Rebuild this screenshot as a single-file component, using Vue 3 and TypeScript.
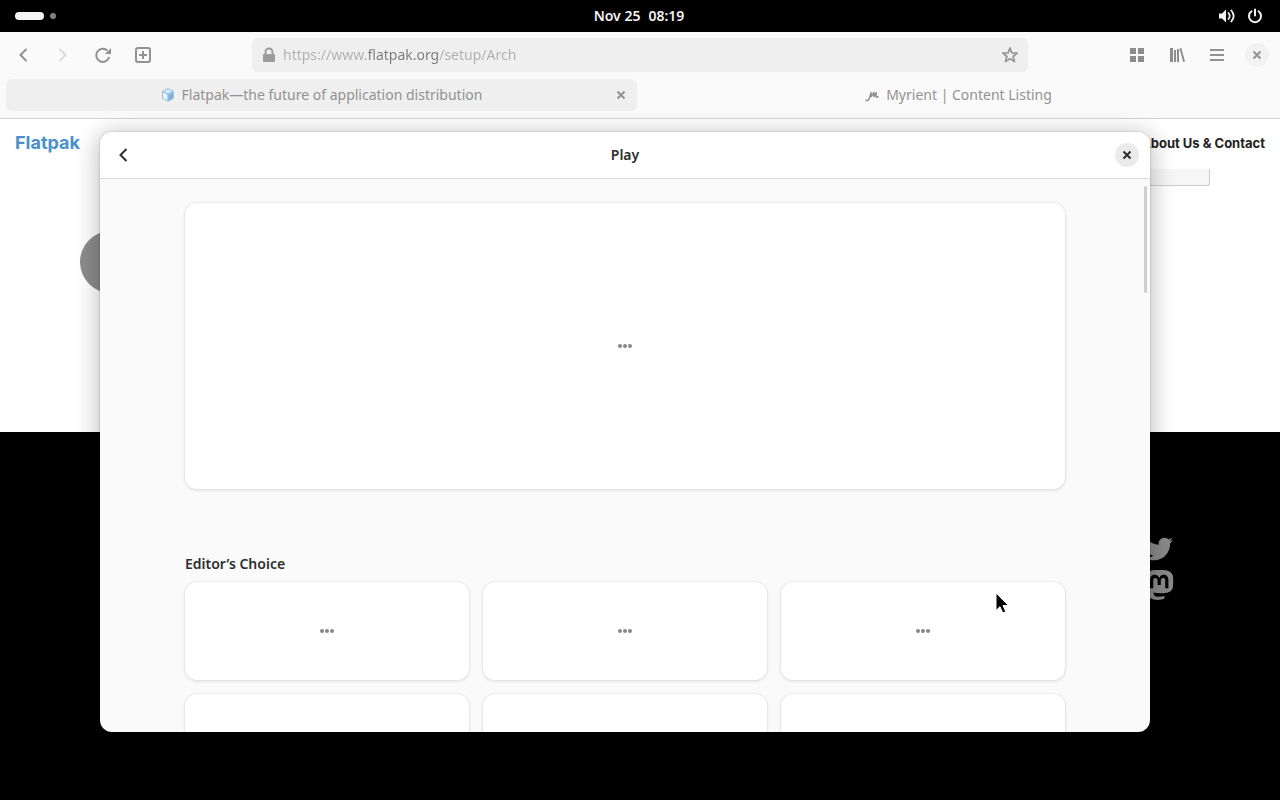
<script setup lang="ts">
import { ref } from 'vue'

interface Tab {
  id: string
  title: string
  active: boolean
}

const address = ref('https://www.flatpak.org/setup/Arch')
const tabs: Tab[] = [
  { id: 'flatpak', title: 'Flatpak—the future of application distribution', active: true },
  { id: 'myrient', title: 'Myrient | Content Listing', active: false },
]
const editorsChoice: number[] = [1, 2, 3, 4, 5, 6]
</script>

<template>
  <div class="desktop">
    <header class="topbar">
      <button class="workspaces" aria-label="Activities"><i class="pill"></i><i class="dot"></i></button>
      <button class="clock"><span>Nov 25</span><span>08:19</span></button>
      <button class="status" aria-label="System menu">
        <svg width="18" height="16" viewBox="0 0 18 16">
          <path d="M1 5.500h3L8 1.500v13L4 10.500H1z" fill="#f2f2f2" />
          <path d="M10.500 5q2.400 3 0 6M13.300 2.500q4.800 5.500 0 11" fill="none" stroke="#f2f2f2" stroke-width="1.800" stroke-linecap="round" />
        </svg>
        <svg width="16" height="16" viewBox="0 0 16 16">
          <path d="M4.500 3.300a6 6 0 1 0 7 0M8 1.500v6" fill="none" stroke="#f2f2f2" stroke-width="2" stroke-linecap="round" />
        </svg>
      </button>
    </header>

    <section class="browser">
      <div class="toolbar">
        <nav class="tools">
          <button aria-label="Back">
            <svg width="16" height="16" viewBox="0 0 16 16"><path d="M11.500 2 5.500 8l6 6" class="line" /></svg>
          </button>
          <button aria-label="Forward" class="off" disabled>
            <svg width="16" height="16" viewBox="0 0 16 16"><path d="m4.500 2 6 6-6 6" class="line" /></svg>
          </button>
          <button aria-label="Reload">
            <svg width="18" height="18" viewBox="0 0 18 18">
              <path d="M15.200 11A6.600 6.600 0 1 1 13.500 4.600" class="line" />
              <path d="M17 2v6h-6l2.300-2.300z" fill="currentColor" />
            </svg>
          </button>
          <button aria-label="New tab">
            <svg width="18" height="18" viewBox="0 0 18 18">
              <rect x="2" y="2" width="14" height="14" rx="2" class="line" />
              <path d="M9 5v8M5 9h8" class="line" />
            </svg>
          </button>
        </nav>

        <div class="address">
          <svg width="16" height="16" viewBox="0 0 16 16">
            <rect x="2" y="7" width="12" height="8" rx="1" fill="#9c9c9c" />
            <path d="M4.500 8V5a3.500 3.500 0 0 1 7 0v3" fill="none" stroke="#9c9c9c" stroke-width="2" />
          </svg>
          <input v-model="address" type="text" aria-label="Address" spellcheck="false" />
          <button aria-label="Bookmark">
            <svg width="18" height="18" viewBox="0 0 18 18">
              <path d="m9 2 1.900 4.900 5.300.3-4.100 3.300 1.400 5.100L9 12.700l-4.500 2.900 1.400-5.100-4.100-3.300 5.300-.3z" fill="none" stroke="#969696" stroke-width="1.700" stroke-linejoin="round" />
            </svg>
          </button>
        </div>

        <div class="tools end">
          <button aria-label="Tab overview">
            <svg width="16" height="16" viewBox="0 0 16 16" fill="#8c8c8c">
              <path d="M1 1h6v6H1zM9 1h6v6H9zM1 9h6v6H1zM9 9h6v6H9z" />
            </svg>
          </button>
          <button aria-label="Library">
            <svg width="16" height="16" viewBox="0 0 16 16" fill="#8c8c8c">
              <path d="M1 1h3v14H1zM5 3h2v12H5zM8 2h2v13H8zM10.500 1.400l1.800-.5L16 14.500l-1.800.5z" />
            </svg>
          </button>
          <button aria-label="Main menu">
            <svg width="16" height="16" viewBox="0 0 16 16"><path d="M1 3h14M1 8h14M1 13h14" class="line" /></svg>
          </button>
          <button aria-label="Close window" class="round">
            <svg width="16" height="16" viewBox="0 0 16 16"><path d="m4.500 4.500 7 7m0-7-7 7" class="line" /></svg>
          </button>
        </div>
      </div>

      <div class="tabs" role="tablist">
        <div v-for="tab in tabs" :key="tab.id" class="tab" :class="{ active: tab.active }">
          <button class="tab-title" role="tab" :aria-selected="tab.active">
            <svg v-if="tab.active" width="14" height="14" viewBox="0 0 14 14">
              <path d="M7 0l6 3v7.500L7 14 1 10.500V3z" fill="#9cc4e2" />
              <path d="M7 1l4.500 2.300L7 5.600 2.500 3.300z" fill="#d5e7f3" />
              <path d="M2 4.500l4.300 2.200v5.700L2 10z" fill="#e9f2f8" />
              <path d="M7.700 6.700L12 4.500V10l-4.300 2.400z" fill="#7fb0d8" />
            </svg>
            <svg v-else width="14" height="14" viewBox="0 0 14 14">
              <path d="M1 12.500c3 .3 3.500-1.800 4-4L6 4.500l.2 4.200L9 4.200l-.2 4.500 2.600-4-.4 4.300c.6.600 1.400.200 2-.500" fill="none" stroke="#8a8a8a" stroke-width="1.300" stroke-linecap="round" stroke-linejoin="round" />
            </svg>
            <span>{{ tab.title }}</span>
          </button>
          <button v-if="tab.active" class="tab-close" aria-label="Close tab">
            <svg width="16" height="16" viewBox="0 0 16 16"><path d="m4.500 4.500 7 7m0-7-7 7" class="line" /></svg>
          </button>
        </div>
      </div>
    </section>

    <main class="site">
      <div class="site-nav">
        <a href="#" class="brand">Flatpak</a>
        <a href="#" class="contact">About Us &amp; Contact</a>
      </div>
      <div class="site-button"></div>
      <div class="distro"></div>
    </main>

    <footer class="site-footer">
      <a href="#" aria-label="Twitter">
        <svg width="28" height="28" viewBox="0 0 512 512" fill="#8a8a8a">
          <path d="M459.370 151.716c.325 4.548.325 9.097.325 13.645 0 138.720-105.583 298.558-298.558 298.558-59.452 0-114.680-17.219-161.137-47.106 8.447.974 16.568 1.299 25.340 1.299 49.055 0 94.213-16.568 130.274-44.832-46.132-.975-84.792-31.188-98.112-72.772 6.498.974 12.995 1.624 19.818 1.624 9.421 0 18.843-1.300 27.614-3.573-48.081-9.747-84.143-51.980-84.143-102.985v-1.299c13.969 7.797 30.214 12.670 47.431 13.319-28.264-18.843-46.781-51.005-46.781-87.391 0-19.492 5.197-37.360 14.294-52.954 51.655 63.675 129.300 105.258 216.365 109.807-1.624-7.797-2.599-15.918-2.599-24.040 0-57.828 46.782-104.934 104.934-104.934 30.213 0 57.502 12.670 76.670 33.137 23.715-4.548 46.456-13.320 66.599-25.340-7.798 24.366-24.366 44.833-46.132 57.827 21.117-2.273 41.584-8.122 60.426-16.243-14.292 20.791-32.161 39.308-52.628 54.253z" />
        </svg>
      </a>
      <a href="#" aria-label="Mastodon">
        <svg width="30" height="30" viewBox="0 0 24 24" fill="#8a8a8a">
          <path d="M23.268 5.313c-.35-2.578-2.617-4.610-5.304-5.004C17.510.242 15.792 0 11.813 0h-.03c-3.980 0-4.835.242-5.288.309C3.882.692 1.496 2.518.917 5.127.640 6.412.610 7.837.661 9.143c.074 1.874.088 3.745.260 5.611.118 1.240.325 2.470.620 3.680.550 2.237 2.777 4.098 4.960 4.857 2.336.792 4.849.923 7.256.380.265-.061.527-.132.786-.213.585-.184 1.270-.390 1.774-.753a.057.057 0 0 0 .023-.043v-1.809a.052.052 0 0 0-.020-.041.053.053 0 0 0-.046-.010 20.282 20.282 0 0 1-4.709.545c-2.730 0-3.463-1.284-3.674-1.818a5.593 5.593 0 0 1-.319-1.433.053.053 0 0 1 .066-.054c1.517.363 3.072.546 4.632.546.376 0 .750 0 1.125-.010 1.570-.044 3.224-.124 4.768-.422.038-.008.077-.015.110-.024 2.435-.464 4.753-1.920 4.989-5.604.008-.145.030-1.520.030-1.670.002-.512.167-3.630-.024-5.545zm-3.748 9.195h-2.561V8.290c0-1.309-.550-1.976-1.670-1.976-1.230 0-1.846.790-1.846 2.350v3.403h-2.546V8.663c0-1.560-.617-2.350-1.848-2.350-1.112 0-1.668.668-1.670 1.977v6.218H4.822V8.102c0-1.310.337-2.350 1.011-3.120.696-.770 1.608-1.164 2.740-1.164 1.311 0 2.302.500 2.962 1.498l.638 1.060.638-1.060c.660-.999 1.650-1.498 2.960-1.498 1.130 0 2.043.395 2.740 1.164.675.770 1.012 1.810 1.012 3.120z" />
        </svg>
      </a>
    </footer>

    <section class="dialog" role="dialog" aria-labelledby="dialog-title">
      <header class="dialog-bar">
        <button aria-label="Back">
          <svg width="16" height="16" viewBox="0 0 16 16"><path d="M11.500 2 5.500 8l6 6" class="line" /></svg>
        </button>
        <h1 id="dialog-title">Play</h1>
        <button aria-label="Close" class="round">
          <svg width="16" height="16" viewBox="0 0 16 16"><path d="m4.500 4.500 7 7m0-7-7 7" class="line" /></svg>
        </button>
      </header>
      <div class="dialog-body">
        <div class="column">
          <button class="card hero" aria-label="Loading"><i></i><i></i><i></i></button>
          <h2>Editor’s Choice</h2>
          <div class="grid">
            <button v-for="n in editorsChoice" :key="n" class="card" aria-label="Loading"><i></i><i></i><i></i></button>
          </div>
        </div>
        <div class="scrollbar"></div>
      </div>
    </section>

    <svg class="pointer" width="16" height="24" viewBox="0 0 16 24">
      <path d="M1 1v17.500l4-3.800 2.800 6.300 3-1.300L8 13.500h5.500z" fill="#000" stroke="#fff" stroke-width="1" />
    </svg>
  </div>
</template>

<style>
body {
  margin: 0;
}
</style>

<style scoped>
.desktop {
  position: relative;
  display: flex;
  flex-direction: column;
  height: 100vh;
  overflow: hidden;
  background: #000;
  font: 14px/20px "Noto Sans", "Open Sans", sans-serif;
  color: #2e2e2e;
}
.desktop * {
  box-sizing: border-box;
}
button {
  display: flex;
  align-items: center;
  justify-content: center;
  margin: 0;
  padding: 0;
  border: 0;
  background: none;
  color: inherit;
  font: inherit;
}
svg {
  display: block;
  flex: none;
}
a {
  color: inherit;
  text-decoration: none;
}
.line {
  fill: none;
  stroke: currentColor;
  stroke-width: 2;
}

/* Shell top bar */
.topbar {
  display: grid;
  grid-template-columns: 1fr auto 1fr;
  align-items: center;
  flex: none;
  height: 32px;
  padding: 0 17px 0 15px;
  color: #f2f2f2;
}
.workspaces {
  justify-self: start;
  gap: 6px;
}
.pill {
  width: 29px;
  height: 8px;
  border-radius: 4px;
  background: #f6f6f6;
}
.dot {
  width: 6px;
  height: 6px;
  border-radius: 3px;
  background: #808080;
}
.clock {
  gap: 8px;
  font-weight: 600;
}
.status {
  justify-self: end;
  gap: 11px;
}

/* Browser chrome */
.browser {
  flex: none;
  background: #fafafa;
  border-bottom: 1px solid #d4d4d4;
  color: #929292;
}
.toolbar {
  display: flex;
  align-items: center;
  height: 46px;
  padding: 0 6px;
}
.tools {
  display: flex;
  flex: 1;
  gap: 6px;
}
.tools button {
  width: 34px;
  height: 34px;
}
.tools .off {
  color: #dcdcdc;
}
.end {
  justify-content: flex-end;
}
.tools .round {
  width: 24px;
  height: 24px;
  margin: 5px;
  border-radius: 50%;
  background: #f2f2f2;
}
.address {
  display: flex;
  align-items: center;
  gap: 6px;
  flex: 0 1 776px;
  min-width: 0;
  height: 34px;
  padding: 0 9px;
  border-radius: 6px;
  background: #efefef;
}
.address input {
  flex: 1;
  min-width: 0;
  padding: 0;
  border: 0;
  outline: 0;
  font: inherit;
  color: transparent;
  background: linear-gradient(90deg, #b0b0b0 84px, #7c7c7c 84px, #7c7c7c 156px, #b0b0b0 156px);
  -webkit-background-clip: text;
  background-clip: text;
}
.tabs {
  display: grid;
  grid-template-columns: repeat(2, minmax(0, 1fr));
  gap: 6px;
  padding: 1px 6px 7px;
}
.tab {
  display: flex;
  height: 32px;
  padding: 0 8px;
  border-radius: 6px;
}
.tab.active {
  padding-left: 24px;
  background: #efefef;
}
.tab-title {
  flex: 1;
  gap: 7px;
  min-width: 0;
  white-space: nowrap;
}
.tab-close {
  width: 16px;
}

/* Web page */
.site {
  position: relative;
  flex: none;
  height: 313px;
  background: #fff;
  font-family: Inter, sans-serif;
}
.site-nav {
  display: flex;
  align-items: center;
  justify-content: space-between;
  height: 50px;
  padding: 0 15px 2px;
  font-weight: 700;
}
.brand {
  color: #4a90cb;
  font-size: 18px;
}
.contact {
  color: #222;
  font-size: 13px;
}
.site-button {
  width: 180px;
  height: 17px;
  margin: 0 70px 0 auto;
  border: 1px solid #ccc;
  border-top: 0;
  border-radius: 0 0 3px 3px;
  background: #f6f6f6;
}
.distro {
  width: 62px;
  height: 62px;
  margin: 45px 80px;
  border-radius: 50%;
  background: #8c8c8c;
}
.site-footer {
  display: grid;
  flex: 1;
  align-content: start;
  justify-content: end;
  justify-items: center;
  gap: 7px;
  padding: 103px 106px 0;
}

/* Software dialog */
.dialog {
  position: absolute;
  inset: 132px 130px 68px 100px;
  display: flex;
  flex-direction: column;
  overflow: hidden;
  border-radius: 12px;
  background: #fafafa;
  box-shadow: 0 0 2px rgba(0, 0, 0, 0.3), 0 4px 22px 4px rgba(0, 0, 0, 0.22);
}
.dialog-bar {
  display: flex;
  align-items: center;
  justify-content: space-between;
  flex: none;
  height: 47px;
  padding: 0 6px;
  border-bottom: 1px solid #dadada;
  background: #fff;
}
.dialog-bar button {
  width: 34px;
  height: 34px;
}
.dialog-bar .round {
  width: 24px;
  height: 24px;
  margin: 0 5px;
  border-radius: 50%;
  background: #ebebeb;
}
h1,
h2 {
  margin: 0;
  font-size: 14px;
  font-weight: 600;
  line-height: 20px;
}
.dialog-body {
  position: relative;
  flex: 1;
  min-height: 0;
  overflow: hidden;
}
.column {
  max-width: 880px;
  margin: 24px auto 0;
}
.card {
  gap: 1px;
  width: 100%;
  height: 98px;
  border-radius: 12px;
  background: #fff;
  box-shadow: 0 0 0 1px rgba(0, 0, 0, 0.03), 0 1px 3px 1px rgba(0, 0, 0, 0.07);
}
.card i {
  width: 4px;
  height: 4px;
  border-radius: 2px;
  background: #888;
}
.hero {
  height: 286px;
}
h2 {
  margin: 65px 0 8px;
}
.grid {
  display: grid;
  grid-template-columns: repeat(3, 1fr);
  gap: 14px;
}
.scrollbar {
  position: absolute;
  top: 7px;
  right: 3px;
  width: 3px;
  height: 107px;
  border-radius: 2px;
  background: #cfcfcf;
}
.pointer {
  position: absolute;
  top: 592px;
  left: 995px;
}
</style>
